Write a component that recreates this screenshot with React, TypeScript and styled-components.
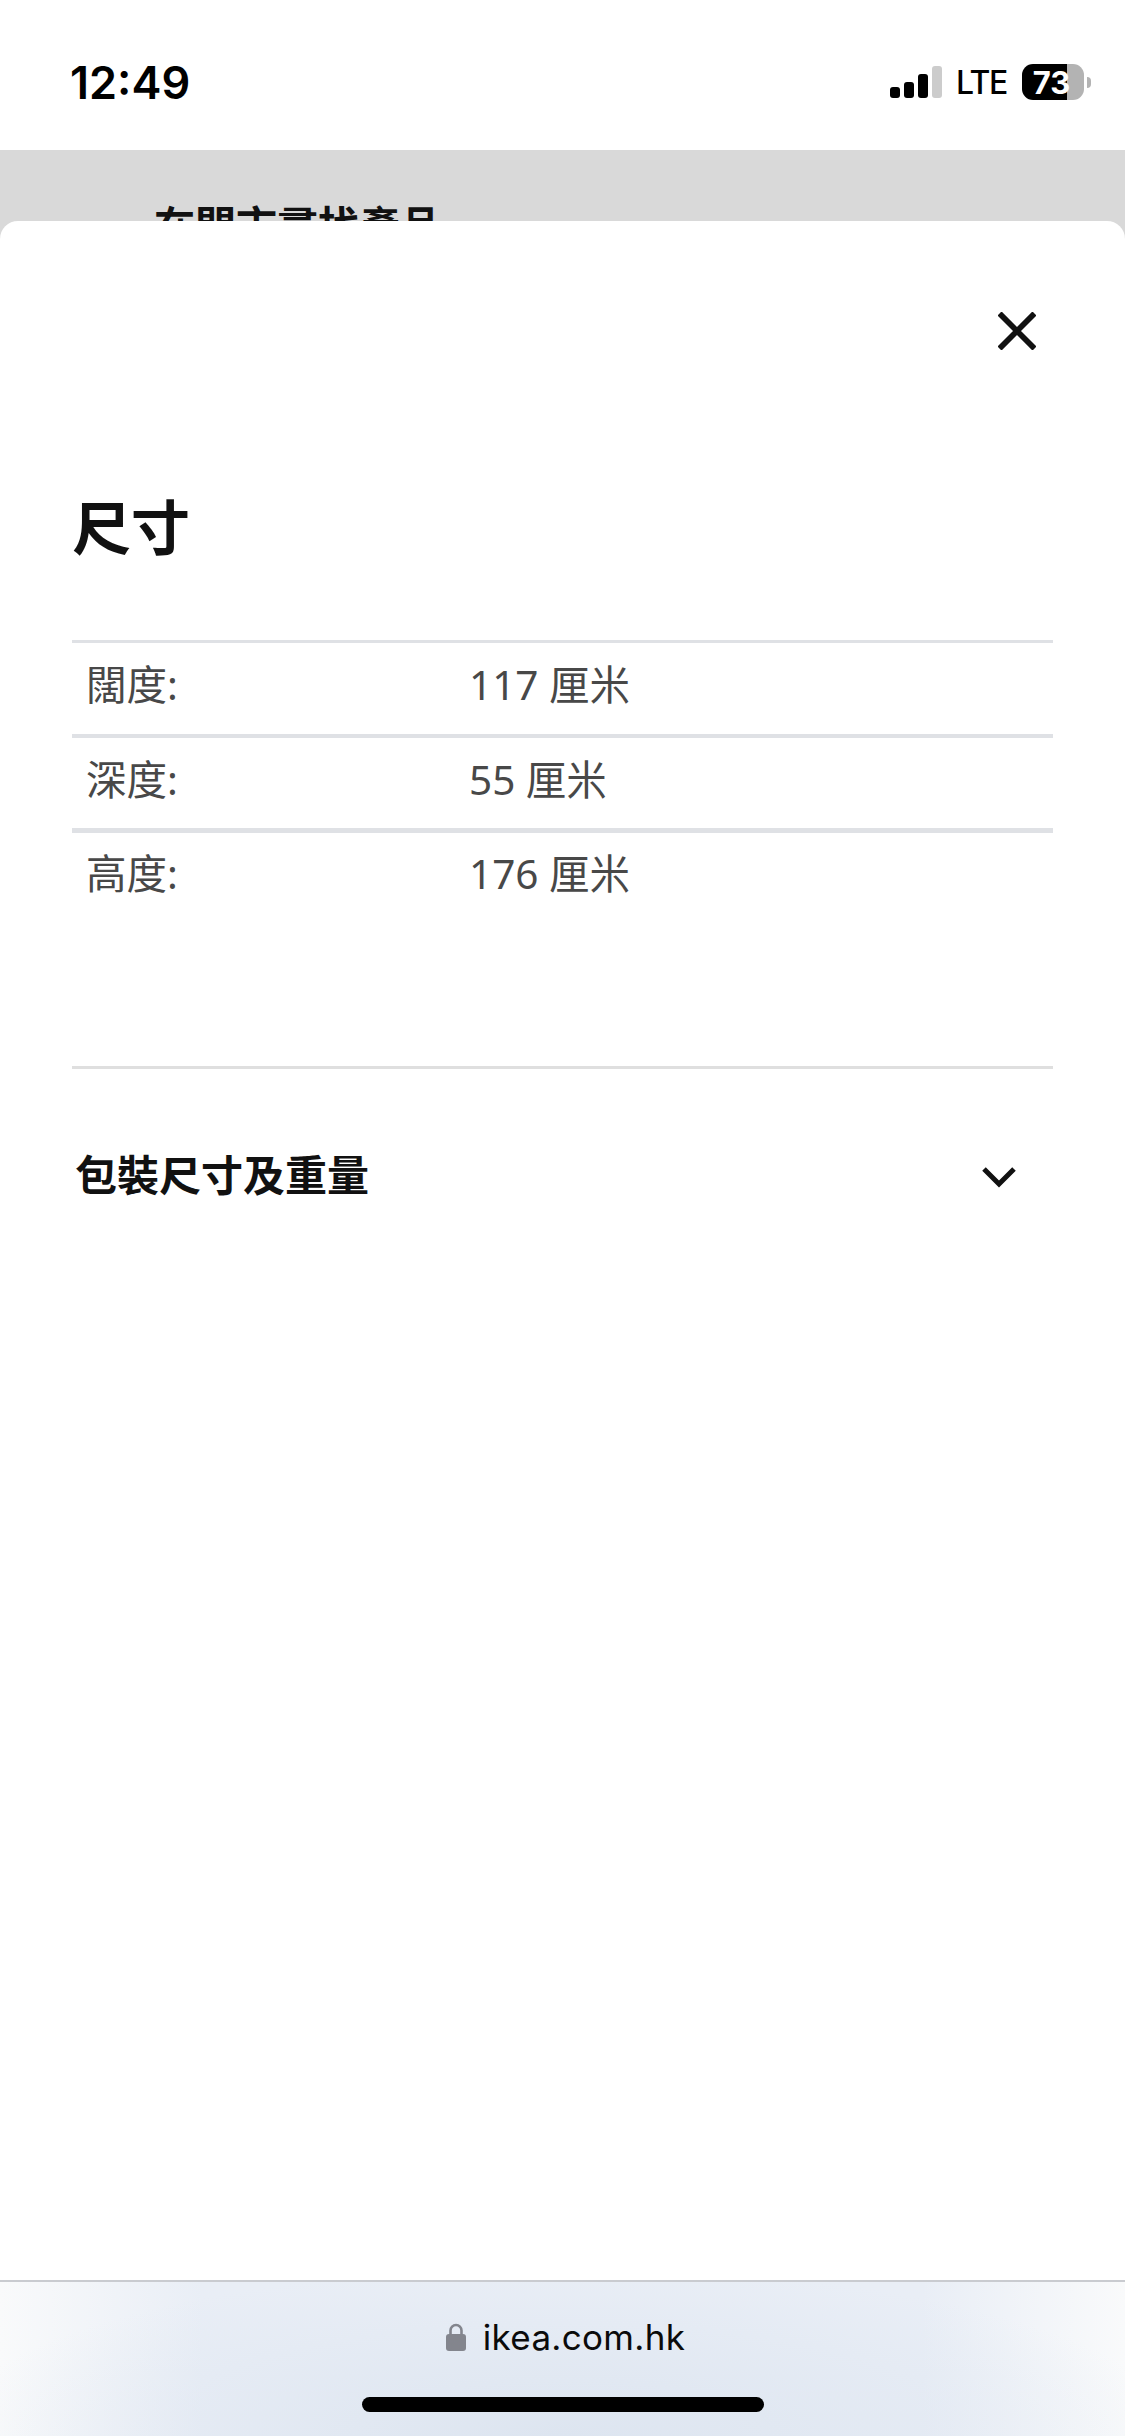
import React from 'react';
import styled, { createGlobalStyle } from 'styled-components';

const GlobalStyle = createGlobalStyle`
  html, body {
    margin: 0;
    padding: 0;
    background: #fff;
  }
  * {
    box-sizing: border-box;
  }
`;

const Screen = styled.div`
  display: flex;
  flex-direction: column;
  width: 1125px;
  height: 2436px;
  overflow: hidden;
  background: #fff;
  font-family: "Noto Sans", "Noto Sans CJK TC", sans-serif;
`;

const StatusBar = styled.div`
  display: flex;
  justify-content: space-between;
  align-items: center;
  flex-shrink: 0;
  height: 150px;
  padding: 14px 34px 0 70px;
  background: #fff;
`;

const Time = styled.span`
  font-family: Inter, "Liberation Sans", sans-serif;
  font-size: 45px;
  font-weight: 600;
  line-height: 1;
  color: #000;
`;

const StatusIcons = styled.div`
  display: flex;
  align-items: center;
`;

const Signal = styled.div`
  display: flex;
  align-items: flex-end;
  gap: 4px;
  height: 32px;
  margin-right: 14px;
`;

const SignalBar = styled.div<{ $h: number; $off?: boolean }>`
  width: 10px;
  height: ${(p) => p.$h}px;
  border-radius: 3px;
  background: ${(p) => (p.$off ? '#cccccc' : '#000')};
`;

const Network = styled.span`
  font-family: Inter, "Liberation Sans", sans-serif;
  font-size: 32px;
  font-weight: 500;
  line-height: 1;
  letter-spacing: -1.4px;
  color: #000;
  margin: 2px 15px 0 0;
`;

const Battery = styled.div`
  display: flex;
  align-items: center;
  justify-content: center;
  width: 62px;
  height: 36px;
  border-radius: 11px;
  background: linear-gradient(to right, #000 45px, #b3b3b3 45px);
  font-family: Inter, "Liberation Sans", sans-serif;
  font-size: 31px;
  font-weight: 700;
  color: #fff;
  padding-right: 3px;
`;

const BatteryNub = styled.div`
  width: 4px;
  height: 11px;
  margin-left: 3px;
  border-radius: 0 4px 4px 0;
  background: #b3b3b3;
`;

const Backdrop = styled.div`
  flex-shrink: 0;
  height: 91px;
  padding: 47px 0 0 154px;
  background: #d9d9d9;
  overflow: hidden;
`;

const BackdropTitle = styled.div`
  font-size: 41px;
  font-weight: 700;
  line-height: 56px;
  color: #111;
`;

const Sheet = styled.div`
  position: relative;
  flex: 1;
  display: flex;
  flex-direction: column;
  margin-top: -20px;
  padding: 0 72px;
  border-radius: 18px 18px 0 0;
  background: #fff;
`;

const CloseRow = styled.div`
  display: flex;
  justify-content: flex-end;
  padding: 91px 17px 0 0;
`;

const Heading = styled.h1`
  margin: 137px 0 0;
  font-size: 59px;
  font-weight: 700;
  line-height: 80px;
  color: #111;
`;

const SizeTable = styled.div`
  display: flex;
  flex-direction: column;
  margin-top: 73px;
`;

const SizeRow = styled.div<{ $rule: number }>`
  display: flex;
  align-items: center;
  height: 94px;
  padding: 0 0 12px 14px;
  border-top: ${(p) => p.$rule}px solid #dfe1e5;
  font-size: 40.5px;
  color: #484848;
`;

const SizeLabel = styled.span`
  width: 383px;
`;

const SizeValue = styled.span``;

const Accordion = styled.div`
  display: flex;
  justify-content: space-between;
  align-items: center;
  margin-top: 144px;
  height: 220px;
  padding: 0 37px 0 3px;
  border-top: 3px solid #dfdfdf;
`;

const AccordionTitle = styled.span`
  margin-bottom: 10px;
  font-size: 42px;
  font-weight: 700;
  color: #111;
`;

const Footer = styled.div`
  flex-shrink: 0;
  display: flex;
  flex-direction: column;
  align-items: center;
  height: 156px;
  padding-top: 33px;
  border-top: 2px solid #c9cbd0;
  background:
    radial-gradient(ellipse 620px 170px at 50% 100%, #dde5f0 0%, rgba(221, 229, 240, 0) 100%),
    linear-gradient(to right, #f9fafb 0%, #e9eef6 18%, #e9eef6 82%, #f9fafb 100%);
`;

const Address = styled.div`
  display: flex;
  align-items: center;
  gap: 17px;
  height: 44px;
  padding-left: 6px;
`;

const Domain = styled.span`
  font-family: Inter, "Liberation Sans", sans-serif;
  font-size: 35px;
  font-weight: 400;
  letter-spacing: 0.3px;
  color: #0b0b0b;
`;

const HomeBar = styled.div`
  width: 402px;
  height: 15px;
  margin-top: 38px;
  border-radius: 8px;
  background: #000;
`;

const CloseIcon = () => (
  <svg width="38" height="38" viewBox="0 0 38 38" fill="none" stroke="#111" strokeWidth="5.8">
    <path d="M1.5 1.5 36.5 36.5M36.5 1.5 1.5 36.5" />
  </svg>
);

const ChevronIcon = () => (
  <svg width="34" height="21" viewBox="0 0 34 21" fill="none" stroke="#111" strokeWidth="5">
    <path d="M2 2 17 17 32 2" />
  </svg>
);

const LockIcon = () => (
  <svg width="20" height="28" viewBox="0 0 20 28" fill="none">
    <path d="M4.5 13V7.5a5.5 5.5 0 0 1 11 0V13" stroke="#83858d" strokeWidth="2.6" />
    <rect x="0" y="11" width="20" height="17" rx="3" fill="#83858d" />
  </svg>
);

const sizes = [
  { label: '闊度:', value: '117 厘米', rule: 3 },
  { label: '深度:', value: '55 厘米', rule: 4 },
  { label: '高度:', value: '176 厘米', rule: 5 },
];

const App = () => {
  return (
    <Screen>
      <GlobalStyle />
      <StatusBar>
        <Time>12:49</Time>
        <StatusIcons>
          <Signal>
            <SignalBar $h={11} />
            <SignalBar $h={16} />
            <SignalBar $h={24} />
            <SignalBar $h={32} $off />
          </Signal>
          <Network>LTE</Network>
          <Battery>73</Battery>
          <BatteryNub />
        </StatusIcons>
      </StatusBar>
      <Backdrop>
        <BackdropTitle>在門市尋找產品</BackdropTitle>
      </Backdrop>
      <Sheet>
        <CloseRow>
          <CloseIcon />
        </CloseRow>
        <Heading>尺寸</Heading>
        <SizeTable>
          {sizes.map((row) => (
            <SizeRow key={row.label} $rule={row.rule}>
              <SizeLabel>{row.label}</SizeLabel>
              <SizeValue>{row.value}</SizeValue>
            </SizeRow>
          ))}
        </SizeTable>
        <Accordion>
          <AccordionTitle>包裝尺寸及重量</AccordionTitle>
          <ChevronIcon />
        </Accordion>
      </Sheet>
      <Footer>
        <Address>
          <LockIcon />
          <Domain>ikea.com.hk</Domain>
        </Address>
        <HomeBar />
      </Footer>
    </Screen>
  );
};

export default App;
